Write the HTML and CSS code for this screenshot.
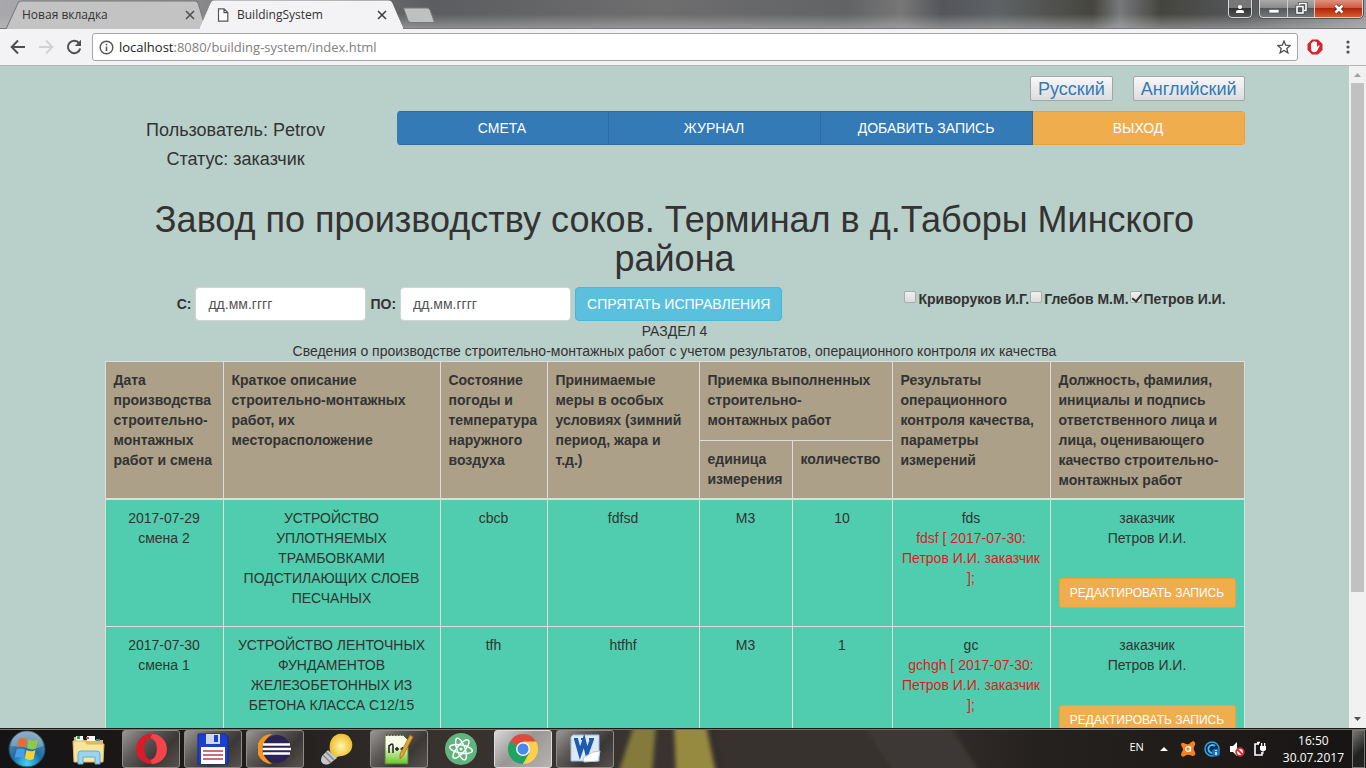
FILE: index.html
```html
<!DOCTYPE html>
<html lang="ru">
<head>
<meta charset="utf-8">
<title>BuildingSystem</title>
<link rel="stylesheet" href="styles.css">
</head>
<body>
<header class="browser">
  <div class="tabstrip">
    <div class="tabs">
      <div class="tab">
        <svg class="tab-shape" viewBox="0 0 200 28" preserveAspectRatio="none"><path d="M0 28L12 3Q13 1 15 1H189Q191 1 192 3L200 28" fill="#c3c3c4" stroke="#77787a"/></svg>
        <span class="tab-title">Новая вкладка</span>
        <button class="tab-close" aria-label="Закрыть"><svg width="10" height="10" viewBox="0 0 10 10"><path d="M1 1L9 9M9 1L1 9" stroke="#505050" stroke-width="1.6"/></svg></button>
      </div>
      <div class="tab tab-active">
        <svg class="tab-shape" viewBox="0 0 200 28" preserveAspectRatio="none"><path d="M0 28L11 3Q12 1 14 1H186Q188 1 189 3L200 28" fill="#f3f2f4" stroke="#f8f8f8"/></svg>
        <svg class="tab-icon" width="12" height="14" viewBox="0 0 12 14"><path d="M1.5 .8H7L10.8 4.6V13.2H1.5ZM7 .8V4.6H10.8" fill="#fff" stroke="#555" stroke-width="1.2"/></svg>
        <span class="tab-title">BuildingSystem</span>
        <button class="tab-close" aria-label="Закрыть"><svg width="10" height="10" viewBox="0 0 10 10"><path d="M1 1L9 9M9 1L1 9" stroke="#404040" stroke-width="1.6"/></svg></button>
      </div>
      <button class="tab-new" aria-label="Новая вкладка"><svg width="34" height="17" viewBox="0 0 34 17"><path d="M1.5 1H25Q27 1 28 3L32 14Q32.500 15.500 31 15.500H9Q7 15.500 6 13.500Z" fill="#bfc0c1" stroke="#77797b"/></svg></button>
    </div>
    <div class="window-controls">
      <button class="win-user" aria-label="Профиль"><svg width="10" height="10" viewBox="0 0 10 10"><path d="M1 9V7.500Q1 6 3.500 6H6.500Q9 6 9 7.500V9Z" fill="#fff"/><circle cx="5" cy="3" r="2" fill="#fff"/></svg></button>
      <div class="win-group">
        <button class="win-min" aria-label="Свернуть"><svg width="12" height="11" viewBox="0 0 12 11"><rect x="1" y="6.500" width="10" height="3.500" fill="#fff" stroke="#555" stroke-width=".7"/></svg></button>
        <button class="win-max" aria-label="Восстановить"><svg width="13" height="13" viewBox="0 0 13 13"><g fill="none" stroke="#444" stroke-width="3"><path d="M4.500 3V1.500H11V8.500H9"/><rect x="2" y="4.500" width="6" height="6.500"/></g><g fill="none" stroke="#fff" stroke-width="1.600"><path d="M4.500 3V1.500H11V8.500H9"/><rect x="2" y="4.500" width="6" height="6.500"/></g></svg></button>
        <button class="win-close" aria-label="Закрыть окно"><svg width="12" height="12" viewBox="0 0 12 12"><path d="M2.500 2.500L9.500 9.500M9.500 2.500L2.500 9.500" stroke="#5b2525" stroke-width="4"/><path d="M2.500 2.500L9.500 9.500M9.500 2.500L2.500 9.500" stroke="#fff" stroke-width="2.500"/></svg></button>
      </div>
    </div>
  </div>
  <div class="toolbar">
    <button class="tool" aria-label="Назад"><svg width="16" height="16" viewBox="0 0 16 16"><path d="M15 8H2M8 1.500L1.700 8L8 14.500" fill="none" stroke="#505050" stroke-width="2"/></svg></button>
    <button class="tool" aria-label="Вперёд"><svg width="16" height="16" viewBox="0 0 16 16"><path d="M1 8H14M8 1.500L14.300 8L8 14.500" fill="none" stroke="#d2d2d2" stroke-width="2"/></svg></button>
    <button class="tool" aria-label="Обновить"><svg width="16" height="16" viewBox="0 0 16 16"><path d="M13.200 4.300A6.200 6.200 0 1 0 14.200 9.500" fill="none" stroke="#505050" stroke-width="2"/><path d="M15 .8V7H8.800Z" fill="#505050"/></svg></button>
    <div class="address">
      <svg width="15" height="15" viewBox="0 0 15 15"><circle cx="7.500" cy="7.500" r="6.300" fill="none" stroke="#555" stroke-width="1.400"/><path d="M7.500 6.500V11M7.500 3.700V5.300" stroke="#555" stroke-width="1.600"/></svg>
      <span class="url"><span class="host">localhost</span>:8080/building-system/index.html</span>
      <svg width="14" height="14" viewBox="0 0 14 14"><path d="M7 1L8.700 5.200L13.300 5.500L9.800 8.400L10.900 12.900L7 10.400L3.100 12.900L4.200 8.400L.7 5.500L5.300 5.200Z" fill="none" stroke="#505050" stroke-width="1.300"/></svg>
    </div>
    <svg class="adblock" width="16" height="16" viewBox="0 0 16 16"><path d="M5 .5H11L15.500 5V11L11 15.500H5L.5 11V5Z" fill="#d8232c"/><path d="M4 7.500V4.500Q4.600 3.500 5.300 4.300V3Q6 2 6.800 3V2.500Q7.600 1.700 8.400 2.500V3Q9.300 2.300 10 3.200V8L11.500 6.500Q13 6 12.500 7.300L10 12Q7 14.500 4.600 12Q4 10.500 4 7.500Z" fill="#fff"/></svg>
    <button class="menu-dots" aria-label="Меню"><svg width="4" height="14" viewBox="0 0 4 14"><g fill="#505050"><circle cx="2" cy="2" r="1.600"/><circle cx="2" cy="7" r="1.600"/><circle cx="2" cy="12" r="1.600"/></g></svg></button>
  </div>
</header>

<div class="viewport">
  <main class="page">
    <div class="container">
      <div class="languages">
        <button class="lang">Русский</button>
        <button class="lang">Английский</button>
      </div>
      <div class="head-row">
        <div class="user">
          <p>Пользователь: Petrov</p>
          <p>Статус: заказчик</p>
        </div>
        <nav class="nav">
          <button class="nav-btn">СМЕТА</button>
          <button class="nav-btn">ЖУРНАЛ</button>
          <button class="nav-btn">ДОБАВИТЬ ЗАПИСЬ</button>
          <button class="nav-btn nav-exit">ВЫХОД</button>
        </nav>
      </div>
      <h1>Завод по производству соков. Терминал в д.Таборы Минского района</h1>
      <form class="filter">
        <div class="dates">
          <label for="from">С:</label>
          <input class="date" id="from" type="text" placeholder="дд.мм.гггг">
          <label for="to">ПО:</label>
          <input class="date" id="to" type="text" placeholder="дд.мм.гггг">
          <button class="btn-info" type="button">СПРЯТАТЬ ИСПРАВЛЕНИЯ</button>
        </div>
        <div class="people">
          <input class="check" id="p1" type="checkbox"><label for="p1">Криворуков И.Г.</label>
          <input class="check" id="p2" type="checkbox"><label for="p2">Глебов М.М.</label>
          <input class="check" id="p3" type="checkbox" checked><label for="p3">Петров И.И.</label>
        </div>
      </form>
      <p class="section">РАЗДЕЛ 4</p>
      <p class="section">Сведения о производстве строительно-монтажных работ с учетом результатов, операционного контроля их качества</p>
      <table class="journal">
        <colgroup><col class="c-date"><col class="c-desc"><col class="c-weather"><col class="c-measures"><col class="c-unit"><col class="c-qty"><col class="c-result"><col class="c-person"></colgroup>
        <thead>
          <tr>
            <th rowspan="2">Дата производства строительно-монтажных работ и смена</th>
            <th rowspan="2">Краткое описание строительно-монтажных работ, их месторасположение</th>
            <th rowspan="2">Состояние погоды и температура наружного воздуха</th>
            <th rowspan="2">Принимаемые меры в особых условиях (зимний период, жара и т.д.)</th>
            <th colspan="2">Приемка выполненных строительно-<br>монтажных работ</th>
            <th rowspan="2">Результаты операционного контроля качества, параметры измерений</th>
            <th rowspan="2">Должность, фамилия, инициалы и подпись ответственного лица и лица, оценивающего качество строительно-монтажных работ</th>
          </tr>
          <tr>
            <th>единица измерения</th>
            <th>количество</th>
          </tr>
        </thead>
        <tbody>
          <tr>
            <td>2017-07-29<br>смена 2</td>
            <td>УСТРОЙСТВО УПЛОТНЯЕМЫХ ТРАМБОВКАМИ ПОДСТИЛАЮЩИХ СЛОЕВ ПЕСЧАНЫХ</td>
            <td>cbcb</td>
            <td>fdfsd</td>
            <td>М3</td>
            <td>10</td>
            <td>fds<br><span class="fix">fdsf [ 2017-07-30: Петров И.И. заказчик ];</span></td>
            <td>заказчик<br>Петров И.И.<button class="edit">РЕДАКТИРОВАТЬ ЗАПИСЬ</button></td>
          </tr>
          <tr>
            <td>2017-07-30<br>смена 1</td>
            <td>УСТРОЙСТВО ЛЕНТОЧНЫХ ФУНДАМЕНТОВ ЖЕЛЕЗОБЕТОННЫХ ИЗ БЕТОНА КЛАССА С12/15</td>
            <td>tfh</td>
            <td>htfhf</td>
            <td>М3</td>
            <td>1</td>
            <td>gc<br><span class="fix">gchgh [ 2017-07-30: Петров И.И. заказчик ];</span></td>
            <td>заказчик<br>Петров И.И.<button class="edit">РЕДАКТИРОВАТЬ ЗАПИСЬ</button></td>
          </tr>
        </tbody>
      </table>
    </div>
  </main>
  <div class="scrollbar">
    <svg width="17" height="17" viewBox="0 0 17 17"><path d="M5 11L8.500 7L12 11Z" fill="#a3a3a3"/></svg>
    <div class="track"><div class="thumb"></div></div>
    <svg width="17" height="17" viewBox="0 0 17 17"><path d="M5 6L8.500 10L12 6Z" fill="#505050"/></svg>
  </div>
</div>

<footer class="taskbar">
  <svg class="backdrop" viewBox="0 0 1366 39" preserveAspectRatio="none">
    <defs><filter id="soft"><feGaussianBlur stdDeviation="2"/></filter></defs>
    <g filter="url(#soft)"><path d="M634 -5H656L652 45H618Z" fill="#837a3b"/><path d="M674 -5H706L716 45H676Z" fill="#968a3f"/><path d="M716 -5H860L900 45H726Z" fill="#38322f"/><path d="M862 -5H950L980 45H895Z" fill="#3d3835"/></g>
  </svg>
  <button class="start" aria-label="Пуск"><svg width="38" height="38" viewBox="0 0 38 38">
    <defs><radialGradient id="orb" cx=".5" cy=".9" r=".9"><stop offset="0" stop-color="#45d4f4"/><stop offset=".45" stop-color="#1c6ea8"/><stop offset="1" stop-color="#6f94ab"/></radialGradient></defs>
    <circle cx="19" cy="19" r="18" fill="url(#orb)" stroke="#26485e"/><path d="M3 16A16 15 0 0 1 35 16Q27 20 19 18T3 16Z" fill="#fff" opacity=".25"/>
    <path d="M11 9Q15 7 19 9L17.500 17.500Q13.500 15.500 9 17.500Z" fill="#ee6a2c"/><path d="M20.500 9.500Q25 12 30 9.500L28 18.500Q23 20.500 19 18Z" fill="#93c940"/><path d="M8.500 19.500Q13 17.500 17 19.500L15.500 28Q11.500 26 6.500 28Z" fill="#4c9be6"/><path d="M18.500 20Q23 22.500 27.500 20L25.500 29Q21 31 17 28.500Z" fill="#fdd22e"/></svg></button>
  <div class="tasks">
    <button class="task" aria-label="Проводник"><svg width="34" height="32" viewBox="0 0 34 32"><path d="M2 4H10L12 7H31V29H2Z" fill="#dfb95c"/><path d="M4 3H11V8H4ZM15 3H23V8H15Z" fill="#fff"/><path d="M5 3H8V6H5Z" fill="#32a452"/><path d="M14 4H17V6H14Z" fill="#d24a36"/><path d="M24 6H28V8H24Z" fill="#3480c9"/><path d="M1 8H13L15 11H32L31 29H2Z" fill="#f7e59c" stroke="#d6b964"/><path d="M6 31V21Q6 18 9 18H25Q28 18 28 21V31H23V24H11V31Z" fill="#9bd3f0" stroke="#5caedb"/></svg></button>
    <button class="task task-open" aria-label="Opera"><svg width="32" height="32" viewBox="0 0 32 32"><path fill-rule="evenodd" d="M16 1A15 15 0 1 0 16 31A15 15 0 1 0 16 1ZM15.500 5A6.300 11 0 1 1 15.500 27A6.300 11 0 1 1 15.500 5Z" fill="#d81c2c"/><path d="M17 1A15 15 0 0 1 17 31L15.500 27Q22 25 22 16T15.500 5Z" fill="#f3444b"/></svg></button>
    <button class="task task-open" aria-label="Total Commander"><svg width="32" height="32" viewBox="0 0 32 32"><path d="M1 1H28L31 4V31H1Z" fill="#1d3fd0" stroke="#102a91"/><path d="M9 1H23V11H9Z" fill="#cfd8e6"/><path d="M17 2H21V9H17Z" fill="#1d3fd0"/><path d="M4 14H28V31H4Z" fill="#fff"/><path d="M6 18H26M6 22H26M6 26H26" stroke="#bf3d51" stroke-width="1.300"/></svg></button>
    <button class="task task-open" aria-label="Eclipse"><svg width="34" height="32" viewBox="0 0 34 32"><path d="M14 1A15 15 0 0 0 14 31Q6 26 6 16T14 1Z" fill="#f7941e"/><circle cx="18.500" cy="16" r="14" fill="#2c2255"/><path d="M5 11.500H32M4.500 16H33M5 20.500H32" stroke="#fff" stroke-width="2.400"/></svg></button>
    <button class="task" aria-label="Поиск"><svg width="34" height="34" viewBox="0 0 34 34"><defs><radialGradient id="bulb"><stop offset="0" stop-color="#fff7ae"/><stop offset="1" stop-color="#eebd2a"/></radialGradient></defs><path d="M10 19Q8 6 18 2Q29 0 32 10Q34 21 22 24Q17 24 15 27Z" fill="url(#bulb)"/><path d="M8 18L17 26L9 32Q3 34 1 29Q1 24 4 22Z" fill="#c6c8ca"/><path d="M6 20L14 28M3 23L11 31" stroke="#85888b" stroke-width="1.500"/></svg></button>
    <button class="task task-open" aria-label="Notepad++"><svg width="32" height="34" viewBox="0 0 32 34"><defs><linearGradient id="npp" x2="0" y2="1"><stop offset=".35" stop-color="#f6fbe8"/><stop offset="1" stop-color="#62c81e"/></linearGradient></defs><path d="M2 3H20L25 8V32H2Z" fill="url(#npp)" stroke="#63733f"/><path d="M3 3H20" stroke="#555" stroke-width="2" stroke-dasharray="1.500 1.500"/><path d="M6 21V13M6 14Q10 10 10 14V21M12 17H16M14 15V19M17.500 17H21.500M19.500 15V19" fill="none" stroke="#222" stroke-width="1.500"/><path d="M27 3L30 5L20 24L17 27L17 22Z" fill="#e2a32c" stroke="#9d6920" stroke-width=".7"/></svg></button>
    <button class="task" aria-label="Atom"><svg width="34" height="34" viewBox="0 0 34 34"><circle cx="17" cy="17" r="16" fill="#5fb57d"/><g fill="none" stroke="#fff" stroke-width="1.400"><ellipse cx="17" cy="17" rx="4" ry="11.500" transform="rotate(-20 17 17)"/><ellipse cx="17" cy="17" rx="4" ry="11.500" transform="rotate(40 17 17)"/><ellipse cx="17" cy="17" rx="4" ry="11.500" transform="rotate(100 17 17)"/></g><circle cx="17" cy="17" r="1.500" fill="#fff"/></svg></button>
    <button class="task task-open task-current" aria-label="Chrome"><svg width="30" height="30" viewBox="0 0 30 30"><path d="M15 15L2 7.500A15 15 0 0 1 28 7.500Z" fill="#dd4b3e"/><path d="M15 15L2 7.500A15 15 0 0 0 15 30L21.500 18.700Z" fill="#1da463"/><path d="M15 15L15 7.500H28A15 15 0 0 1 15 30L21.500 18.700Z" fill="#fdd04c"/><circle cx="15" cy="15" r="7" fill="#f5f5f5"/><circle cx="15" cy="15" r="5.500" fill="#4688f1"/></svg></button>
    <button class="task task-open" aria-label="Word"><svg width="32" height="32" viewBox="0 0 32 32"><path d="M4 2H30V28H2V4Z" fill="#dceaf8" stroke="#9dbfe0"/><path d="M5 6H9M12 6H16M20 6H25" stroke="#1e5cab" stroke-width="2"/><path d="M7 6L11 20L15 8L18 20L23 6" fill="none" stroke="#1e5cab" stroke-width="4"/><path d="M14 25L24 19L31 18L29 28L15 29Z" fill="#fff" stroke="#b5c9dc"/></svg></button>
  </div>
  <div class="tray">
    <span class="kbd">EN</span>
    <div class="tray-icons">
      <svg width="8" height="6" viewBox="0 0 8 6"><path d="M0 5L4 1L8 5Z" fill="#fff"/></svg>
      <svg width="16" height="16" viewBox="0 0 16 16"><path d="M1 4Q1 1 4 2Q7 4 9 3Q11 1 13 0Q16 1 15 4Q13 7 14 9Q16 12 15 14Q13 16 10 14Q7 13 5 15Q2 17 1 14Q1 12 3 9Q3 7 1 4Z" fill="#f58220"/><circle cx="8" cy="8" r="2.300" fill="none" stroke="#fff" stroke-width="1.300"/><path d="M10.500 5.500V10.500" stroke="#fff" stroke-width="1.300"/></svg>
      <svg width="17" height="16" viewBox="0 0 17 16"><circle cx="8" cy="8" r="7" fill="#0c2c4c" stroke="#38a0e0" stroke-width="1.500"/><path d="M11 5A4 4 0 1 0 8 12" fill="none" stroke="#49b6f2" stroke-width="2"/><circle cx="12" cy="11.500" r="4" fill="#1675c6"/><path d="M12 11V14M12 9V10" stroke="#fff" stroke-width="1.500"/></svg>
      <svg width="16" height="16" viewBox="0 0 16 16"><path d="M1 5H4L8 1V15L4 11H1Z" fill="#fff"/><circle cx="11" cy="11" r="3.800" fill="#fff" stroke="#d92b2b" stroke-width="1.800"/><path d="M8.500 8.500L13.500 13.500" stroke="#d92b2b" stroke-width="1.800"/></svg>
      <svg width="14" height="16" viewBox="0 0 14 16"><path d="M6 3H2V14H9V11M4 1.500H7" fill="none" stroke="#fff" stroke-width="1.600"/><path d="M7 5H13V8Q13 10 10 10T7 8ZM8 2H9.300V5H8ZM11 2H12.300V5H11ZM9.500 10H10.500V13H9.500Z" fill="#fff"/></svg>
    </div>
    <div class="clock"><span>16:50</span><span>30.07.2017</span></div>
    <button class="peek" aria-label="Показать рабочий стол"></button>
  </div>
</footer>
</body>
</html>
```
FILE: styles.css
```css
* { box-sizing: border-box; }
body {
  margin: 0;
  height: 100vh;
  display: flex;
  flex-direction: column;
  overflow: hidden;
  font: 14px/20px "Liberation Sans", Arial, sans-serif;
  color: #333;
}
button { font: inherit; margin: 0; padding: 0; border: 0; background: none; color: inherit; }
svg { display: block; flex: none; }
p { margin: 0; }

/* Browser frame */
.browser { flex: none; font-family: "Open Sans", "Noto Sans", sans-serif; }
.tabstrip {
  height: 29px;
  display: flex;
  justify-content: space-between;
  border-bottom: 1px solid #77787c;
  background:
    linear-gradient(to bottom, transparent 50%, rgba(190, 190, 190, .5)),
    linear-gradient(to right, #a9a9ad 0, #8a8a8c 14%, #5c5d60 32%, #6e6e6f 48%, #626365 62%, #777 66%, #54555a 69%, #5f6366 73%, #46453f 80%, #77797b 82%, #45453f 85%, #55575a 91%, #999 100%);
}
.tabs { display: flex; padding-left: 6px; }
.tab {
  position: relative;
  width: 200px;
  height: 29px;
  margin-right: -6px;
  padding: 1px 11px 0 16px;
  display: flex;
  align-items: center;
  font-size: 12px;
}
.tab-shape { position: absolute; left: 0; top: 0; width: 100%; height: 100%; }
.tab-active { width: 203px; padding: 1px 16px 0 17px; }
.tab-active .tab-icon { margin-right: 8px; }
.tab-icon, .tab-title, .tab-close { position: relative; }
.tab-title { flex: 1; }
.tab-new { margin-left: 5px; padding-top: 7px; align-self: flex-start; }
.window-controls { display: flex; gap: 7px; padding-right: 3px; align-items: flex-start; }
.win-user, .win-group {
  height: 18px;
  border: 1px solid #d6d6d6;
  border-top: 0;
  border-radius: 0 0 4px 4px;
  background: linear-gradient(#aaa 0, #8b8b8b 45%, #55585a 50%, #777 100%);
  outline: 1px solid #555;
}
.win-user { width: 24px; display: grid; place-items: center; background: linear-gradient(#777 45%, #333 50%, #555); }
.win-group { display: flex; overflow: hidden; }
.win-group button { display: grid; place-items: center; }
.win-min { width: 28px; }
.win-max { width: 27px; }
.win-group .win-min, .win-group .win-max { border-right: 1px solid #ccc; }
.win-close { width: 47px; background: linear-gradient(#e0917f 0, #cf5b42 45%, #b0260c 50%, #da5a31 100%); }
.toolbar {
  height: 37px;
  display: flex;
  align-items: center;
  padding: 0 16px 0 10px;
  background: #f3f2f4;
  border-bottom: 1px solid #b3b5b5;
}
.tool { width: 28px; flex: none; }
.address {
  flex: 1;
  height: 28px;
  margin: 0 9px 0 -2px;
  padding: 0 6px;
  display: flex;
  align-items: center;
  gap: 5px;
  background: #fff;
  border: 1px solid #a6a6a8;
  border-radius: 3px;
}
.url { flex: 1; color: #808080; font-size: 13px; }
.host { color: #222; }
.adblock { margin-right: 23px; }

/* Page area */
.viewport { flex: 1; min-height: 0; display: flex; background: #b9cfc9; }
.page { flex: 1; min-width: 0; overflow: hidden; padding: 10px 15px 0; }
.container { max-width: 1140px; margin: 0 auto; }
.languages { display: flex; justify-content: flex-end; gap: 20px; margin-bottom: 10px; }
.lang {
  height: 25px;
  padding: 0 7px;
  font-size: 18px;
  line-height: 20px;
  color: #337ab7;
  background: linear-gradient(#f8f8f8, #dcdcdc);
  border: 1px solid #a3a6a6;
  border-radius: 2px;
}
.head-row { display: grid; grid-template-columns: calc(25% - 23px) 1fr; gap: 30px; align-items: start; }
.user { padding-top: 9px; display: grid; gap: 9px; text-align: center; font-size: 18px; }
.nav { display: grid; grid-template-columns: repeat(4, 1fr); border-radius: 4px; overflow: hidden; }
.nav-btn { height: 34px; background: #337ab7; border: 1px solid #2e6da4; border-left-width: 0; color: #fff; }
.nav-exit { background: #f0ad4e; border-color: #eea236; }
h1 { margin: 31px 0 9px; font-size: 36px; line-height: 39px; font-weight: 400; text-align: center; }
.filter { display: grid; grid-template-columns: 25fr 12fr; gap: 30px; font-weight: 700; }
.dates { display: flex; justify-content: center; align-items: center; gap: 4px; }
.date {
  width: 171px;
  height: 34px;
  padding: 6px 12px;
  font: 14px/20px "Liberation Sans", Arial, sans-serif;
  color: #555;
  background: #fff;
  border: 1px solid #c9d6d2;
  border-radius: 4px;
}
.date::placeholder { color: #555; opacity: 1; }
.btn-info { height: 34px; padding: 0 11px; color: #fff; background: #5bc0de; border: 1px solid #46b8da; border-radius: 4px; font-weight: 400; }
.people { display: flex; justify-content: center; align-items: flex-start; padding-top: 2px; white-space: nowrap; }
.check {
  appearance: none;
  flex: none;
  width: 12px;
  height: 12px;
  margin: 2px 2px 0 1px;
  border: 1px solid #a5acaa;
  border-radius: 2px;
  background: linear-gradient(#f0f0f0, #dcdcdc);
  position: relative;
}
.check:checked::after {
  content: "";
  position: absolute;
  left: 3px;
  top: 0;
  width: 4px;
  height: 8px;
  border: solid #333;
  border-width: 0 2px 2px 0;
  transform: rotate(38deg);
}
.section { text-align: center; }

/* Journal */
.journal { width: 100%; table-layout: fixed; border-collapse: collapse; }
.c-date { width: 118px; }
.c-desc { width: 217px; }
.c-weather { width: 107px; }
.c-measures { width: 152px; }
.c-unit { width: 93px; }
.c-qty { width: 100px; }
.c-result { width: 158px; }
.c-person { width: 194px; }
.journal th, .journal td { padding: 8px; border: 1px solid #ddd; vertical-align: top; }
.journal th { text-align: left; background: #aca089; }
.journal thead { border-bottom: 2px solid #ddd; }
.journal td { text-align: center; background: #4fcdae; }
.fix { color: #e0181e; }
.edit {
  display: block;
  width: 100%;
  height: 30px;
  margin: 30px 0 10px;
  font-size: 12px;
  white-space: nowrap;
  color: #fff;
  background: #f0ad4e;
  border: 1px solid #eea236;
  border-radius: 3px;
}
.scrollbar { width: 17px; flex: none; display: flex; flex-direction: column; background: #f1f1f1; }
.track { flex: 1; padding: 0 2px; }
.thumb { height: 81%; background: #c1c1c1; }

/* Taskbar */
.taskbar {
  position: relative;
  flex: none;
  height: 40px;
  display: flex;
  align-items: stretch;
  border-top: 1px solid #1b1b1b;
  box-shadow: inset 0 1px #77716c;
  background: linear-gradient(to right, #151313 0, #211e1d 20%, #37322e 32%, #3a3430 48%, #2f2926 60%, #332e2b 68%, #25211e 76%, #171514 100%);
  font-family: "Open Sans", "Noto Sans", sans-serif;
  color: #fff;
}
.backdrop { position: absolute; inset: 1px 0 0; width: 100%; height: 38px; }
.start { position: relative; width: 60px; padding-left: 8px; }
.tasks { position: relative; display: flex; gap: 4px; padding-top: 1px; }
.task { width: 58px; display: grid; place-items: center; border-radius: 3px; }
.task-open {
  border: 1px solid #8e8c8a;
  background: linear-gradient(135deg, #999694 0, #5c5855 35%, #3b3735 65%, #57524f 100%);
}
.task-current { background: linear-gradient(135deg, #d8d8d8, #999694 45%, #b5b2b0); border-color: #ddd; }
.tray { position: relative; margin-left: auto; display: flex; align-items: center; font-size: 12px; }
.kbd { font-size: 11px; margin: 0 16px 4px 0; }
.tray-icons { display: flex; align-items: center; gap: 8px; margin-right: 16px; }
.tray-icons svg:first-child { margin-right: 4px; }
.clock { display: grid; line-height: 17px; text-align: center; margin-right: 8px; }
.peek { width: 13px; align-self: stretch; margin: 1px 1px 0 0; border: 1px solid #777; background: linear-gradient(135deg, #777, #222 60%); }
```
